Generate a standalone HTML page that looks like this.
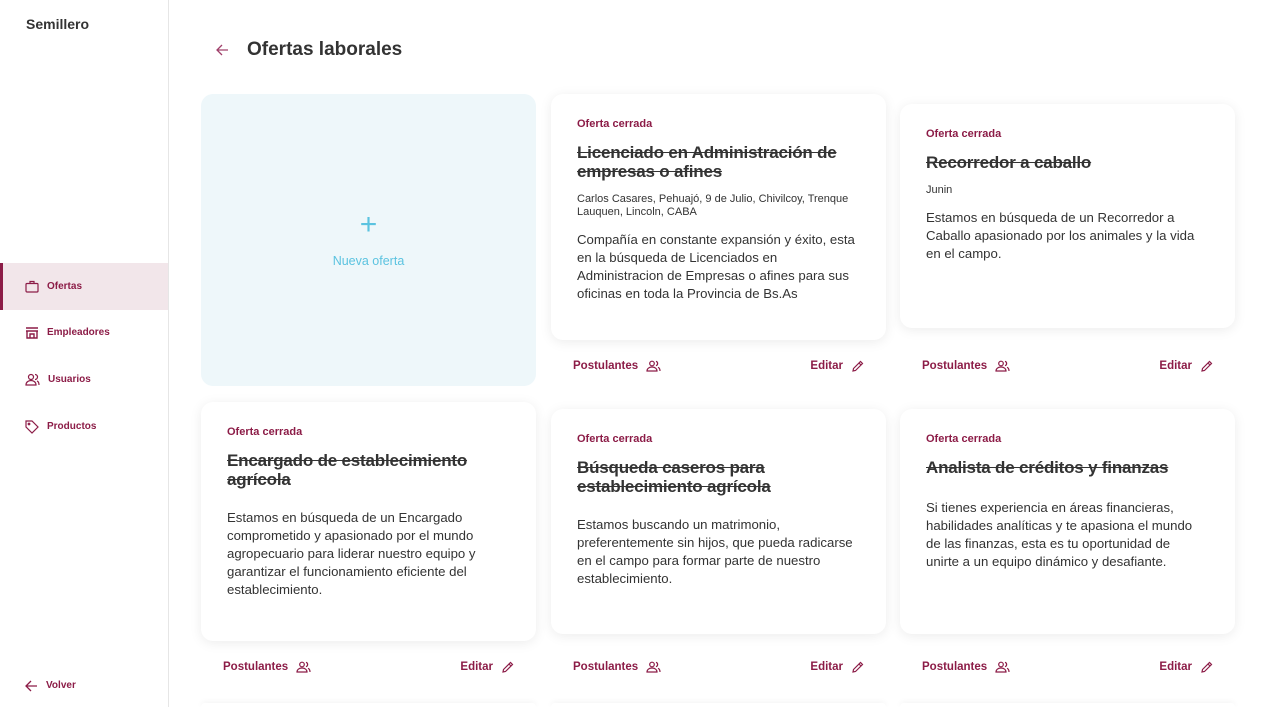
<!DOCTYPE html>
<html><head><meta charset="utf-8"><style>
*{margin:0;padding:0;box-sizing:border-box}
html,body{width:1266px;height:707px;overflow:hidden}
body{background:#fff;font-family:"Liberation Sans",sans-serif;color:#333;position:relative}
.side{position:absolute;left:0;top:0;width:169px;height:707px;border-right:1px solid #e6e6e6}
.brand{position:absolute;left:26px;top:16px;font-size:14px;font-weight:bold;color:#333}
.nav{position:absolute;left:0;width:168px;height:47px;display:flex;align-items:center;padding-left:25px;font-size:10px;font-weight:bold;color:#8c1c47}
.nav svg{margin-right:8px}
.nav.act{background:#f2e6ea;border-left:3px solid #8c1c47;padding-left:22px}
h1{position:absolute;left:247px;top:39px;font-size:19px;font-weight:bold;color:#333}
.card{position:absolute;width:335px;background:#fff;border-radius:12px;box-shadow:0 2px 12px rgba(0,0,0,.08);padding:24px 30px 24px 26px}
.lab{font-size:11px;font-weight:bold;color:#8c1c47;margin-bottom:13px}
.tit{font-size:17px;font-weight:bold;line-height:19px;text-decoration:line-through;color:#333;letter-spacing:-.2px}
.loc{font-size:11px;line-height:13px;margin-top:12px;color:#333}
.body{font-size:13.2px;line-height:18px;margin-top:12px;color:#333}
.foot{position:absolute;width:335px;display:flex;justify-content:space-between;padding:0 22px;font-size:11.5px;font-weight:bold;color:#8c1c47}
.foot span{display:flex;align-items:center;gap:8px}
.new{position:absolute;left:201px;top:94px;width:335px;height:292px;background:#eef7fa;border-radius:12px;text-align:center;color:#5bc3e0}
.stub{position:absolute;top:703px;width:335px;height:4px;background:#fff;border-radius:12px 12px 0 0;box-shadow:0 -1px 6px rgba(0,0,0,.06)}
</style></head><body>
<div class="side">
<div class="brand">Semillero</div>
<div class="nav act" style="top:263px"><svg width="14" height="13" viewBox="0 0 14 13" fill="none" stroke="#8c1c47" stroke-width="1.2"><rect x="1" y="3.5" width="12" height="8.5" rx="1"/><path d="M5 3.5V1.5h4v2"/></svg>Ofertas</div>
<div class="nav" style="top:309px"><svg width="14" height="13" viewBox="0 0 14 13" fill="none" stroke="#8c1c47" stroke-width="1.4"><path d="M1 2h12M1 5h12M2 5v7h10V5M5 12V8h4v4"/></svg>Empleadores</div>
<div class="nav" style="top:356px"><svg width="15" height="13" viewBox="0 0 15 13" fill="none" stroke="#8c1c47" stroke-width="1.2"><circle cx="6" cy="4" r="2.5"/><path d="M1 12c0-3 2.5-4.5 5-4.5s5 1.5 5 4.5zM10 1.5a2.5 2.5 0 010 5M12 8c1.5.5 2 2 2 4"/></svg>Usuarios</div>
<div class="nav" style="top:403px"><svg width="14" height="14" viewBox="0 0 14 14" fill="none" stroke="#8c1c47" stroke-width="1.2"><path d="M1 1h6l6 6-6 6-6-6z"/><circle cx="4" cy="4" r=".8"/></svg>Productos</div>
<div class="nav" style="top:662px"><svg width="13" height="12" viewBox="0 0 13 12" fill="none" stroke="#8c1c47" stroke-width="1.3"><path d="M12 6H1M6 1L1 6l5 5"/></svg>Volver</div>
</div>
<svg style="position:absolute;left:216px;top:44px" width="13" height="12" viewBox="0 0 13 12" fill="none" stroke="#a0406a" stroke-width="1.3"><path d="M12 6H1M6 1L1 6l5 5"/></svg>
<h1>Ofertas laborales</h1>
<div class="new"><div style="position:absolute;top:116px;width:100%;font-size:30px;font-weight:300;line-height:30px">+</div><div style="position:absolute;top:160px;width:100%;font-size:12.5px">Nueva oferta</div></div>

<div class="card" style="left:551px;top:94px;height:246px"><div class="lab">Oferta cerrada</div><div class="tit">Licenciado en Administración de empresas o afines</div><div class="loc">Carlos Casares, Pehuajó, 9 de Julio, Chivilcoy, Trenque Lauquen, Lincoln, CABA</div><div class="body">Compañía en constante expansión y éxito, esta en la búsqueda de Licenciados en Administracion de Empresas o afines para sus oficinas en toda la Provincia de Bs.As</div></div>
<div class="card" style="left:900px;top:104px;height:224px"><div class="lab">Oferta cerrada</div><div class="tit">Recorredor a caballo</div><div class="loc">Junin</div><div class="body">Estamos en búsqueda de un Recorredor a Caballo apasionado por los animales y la vida en el campo.</div></div>

<div class="card" style="left:201px;top:402px;height:239px"><div class="lab">Oferta cerrada</div><div class="tit">Encargado de establecimiento agrícola</div><div class="body" style="margin-top:20px">Estamos en búsqueda de un Encargado comprometido y apasionado por el mundo agropecuario para liderar nuestro equipo y garantizar el funcionamiento eficiente del establecimiento.</div></div>
<div class="card" style="left:551px;top:409px;height:225px"><div class="lab">Oferta cerrada</div><div class="tit">Búsqueda caseros para establecimiento agrícola</div><div class="body" style="margin-top:20px">Estamos buscando un matrimonio, preferentemente sin hijos, que pueda radicarse en el campo para formar parte de nuestro establecimiento.</div></div>
<div class="card" style="left:900px;top:409px;height:225px"><div class="lab">Oferta cerrada</div><div class="tit">Analista de créditos y finanzas</div><div class="body" style="margin-top:22px">Si tienes experiencia en áreas financieras, habilidades analíticas y te apasiona el mundo de las finanzas, esta es tu oportunidad de unirte a un equipo dinámico y desafiante.</div></div>

<div class="stub" style="left:201px"></div>
<div class="stub" style="left:551px"></div>
<div class="stub" style="left:900px"></div>

<div id="f"></div>
<script>
var pos=[[551,358],[900,358],[201,659],[551,659],[900,659]];
var ppl='<svg width="15" height="12" viewBox="0 0 15 12" fill="none" stroke="#8c1c47" stroke-width="1.2"><circle cx="6" cy="3.5" r="2.3"/><path d="M1 11c0-2.5 2.3-4 5-4s5 1.5 5 4zM10 1.3a2.3 2.3 0 010 4.4M12 7.3c1.3.5 2 1.8 2 3.7"/></svg>';
var pen='<svg width="13" height="13" viewBox="0 0 13 13" fill="none" stroke="#8c1c47" stroke-width="1.2"><path d="M2 11l.5-2.5L9.5 1.5l2 2-7 7zM8 3l2 2"/></svg>';
var h='';pos.forEach(function(p){h+='<div class="foot" style="left:'+p[0]+'px;top:'+p[1]+'px;height:16px"><span>Postulantes '+ppl+'</span><span>Editar '+pen+'</span></div>'});
document.getElementById('f').innerHTML=h;
</script>
</body></html>
